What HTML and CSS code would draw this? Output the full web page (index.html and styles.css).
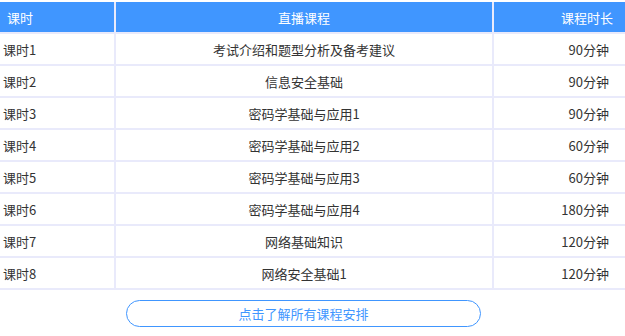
FILE: index.html
```html
<!DOCTYPE html>
<html lang="zh-CN">
<head>
<meta charset="utf-8">
<link rel="stylesheet" href="styles.css">
</head>
<body>
<div class="schedule">
  <div class="grid">
    <div class="cell head c1">课时</div>
    <div class="cell head c2">直播课程</div>
    <div class="cell head c3">课程时长</div>

    <div class="cell c1">课时1</div>
    <div class="cell c2">考试介绍和题型分析及备考建议</div>
    <div class="cell c3">90分钟</div>

    <div class="cell c1">课时2</div>
    <div class="cell c2">信息安全基础</div>
    <div class="cell c3">90分钟</div>

    <div class="cell c1">课时3</div>
    <div class="cell c2">密码学基础与应用1</div>
    <div class="cell c3">90分钟</div>

    <div class="cell c1">课时4</div>
    <div class="cell c2">密码学基础与应用2</div>
    <div class="cell c3">60分钟</div>

    <div class="cell c1">课时5</div>
    <div class="cell c2">密码学基础与应用3</div>
    <div class="cell c3">60分钟</div>

    <div class="cell c1">课时6</div>
    <div class="cell c2">密码学基础与应用4</div>
    <div class="cell c3">180分钟</div>

    <div class="cell c1">课时7</div>
    <div class="cell c2">网络基础知识</div>
    <div class="cell c3">120分钟</div>

    <div class="cell c1">课时8</div>
    <div class="cell c2">网络安全基础1</div>
    <div class="cell c3">120分钟</div>
  </div>
  <div class="more-row">
    <a class="more-btn" href="#">点击了解所有课程安排</a>
  </div>
</div>
</body>
</html>
```

FILE: styles.css
```css
html, body {
  margin: 0;
  padding: 0;
  background: #ffffff;
}

body {
  font-family: "Microsoft YaHei", "Noto Sans CJK SC", "Noto Sans", sans-serif;
  font-size: 13px;
  color: #333333;
}

.schedule {
  width: 625px;
  padding-top: 2px;
}

.grid {
  display: grid;
  grid-template-columns: 114px 376px 131px;
  grid-auto-rows: 30px;
  gap: 2px;
  background: #e9eafb;
  border-bottom: 2px solid #e9eafb;
}

.cell {
  background: #ffffff;
  display: flex;
  align-items: center;
  white-space: nowrap;
}

.cell.head {
  background: #4096ff;
  color: #ffffff;
}

.c1 {
  justify-content: flex-start;
  padding-left: 3px;
}

.c1.head {
  padding-left: 7px;
}

.c2 {
  justify-content: center;
}

.c3 {
  justify-content: flex-end;
  padding-right: 16px;
}

.c3.head {
  padding-right: 12px;
}

.more-row {
  padding-top: 10px;
  padding-left: 126px;
}

.more-btn {
  display: flex;
  align-items: center;
  justify-content: center;
  box-sizing: border-box;
  width: 355px;
  height: 27px;
  border: 1px solid #4096ff;
  border-radius: 14px;
  color: #4096ff;
  text-decoration: none;
  font-size: 13px;
}
```
